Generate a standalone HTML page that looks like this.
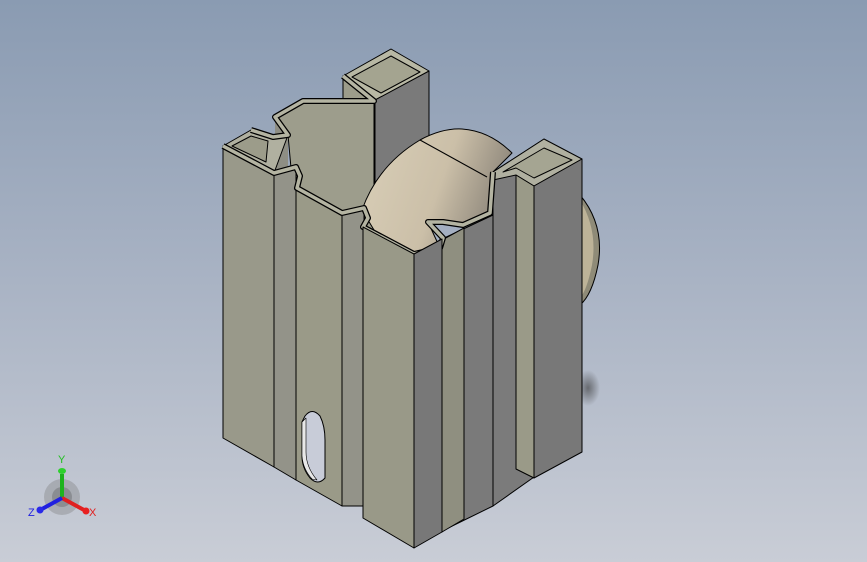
<!DOCTYPE html>
<html><head><meta charset="utf-8"><style>
html,body{margin:0;padding:0;width:867px;height:562px;overflow:hidden}
body{background:linear-gradient(#8a9bb2 0%,#a9b3c4 50%,#c9cdd6 100%)}
svg{position:absolute;left:0;top:0}
</style></head><body>
<svg width="867" height="562" viewBox="0 0 867 562" xmlns="http://www.w3.org/2000/svg">
<defs>
<radialGradient id="sh" cx="0.5" cy="0.5" r="0.5"><stop offset="0" stop-color="#333" stop-opacity="0.6"/><stop offset="1" stop-color="#333" stop-opacity="0"/></radialGradient>
<linearGradient id="wh" x1="0" y1="0" x2="1" y2="0.3"><stop offset="0" stop-color="#d9cfb8"/><stop offset="0.6" stop-color="#cbbfa8"/><stop offset="1" stop-color="#8f887c"/></linearGradient>
</defs>
<g stroke="#000" stroke-width="1" stroke-linejoin="round">
<ellipse cx="588" cy="388" rx="12" ry="18" fill="url(#sh)" stroke="none"/>
<path d="M580,195 Q605,225 598,265 Q592,295 580,305 Z" fill="#8f8b78"/>
<path d="M580,200 Q598,230 592,265 Q587,290 580,298 Z" fill="#bdb398" stroke="none"/>
<polygon points="343,76 375,95 375,180 343,180" fill="#9c9c8a"/>
<polygon points="375,95 429,71 429,300 375,300" fill="#7a7a7a"/>
<polygon points="343,76 391,49 429,71 375,100" fill="#b8b8a4"/>
<polygon points="352,77 391,56 420,72 381,93" fill="#a4a490"/>
<polygon points="275,117 303,101 374,101 374,300 303,300 288,135" fill="#9d9d8c"/>
<polygon points="275,117 288,135 288,300 275,300" fill="#8e8e84" stroke="none"/>
<path d="M362,210 Q378,165 420,140 Q442,128 462,129 Q490,131 512,153 L493,172 L490,213 L463,225 L443,222 L428,222 L440,248 L414,254 L380,240 Z" fill="url(#wh)"/>
<path d="M420,140 L487,177" fill="none"/>
<polygon points="440,240 493,215 493,506 440,532" fill="#7a7a7a"/>
<polygon points="442,240 464,228 464,519 442,532" fill="#8f8f80"/>
<polygon points="493,172 544,139 544,470 493,506" fill="#7b7b7b"/>
<polygon points="493,172 544,139 582,159 534,186 516,175 493,180" fill="#b0b0a0"/>
<polygon points="503,172 544,148 572,160 534,178 516,168" fill="#a5a592"/>
<polygon points="516,175 534,186 534,478 516,469" fill="#9a9a88"/>
<polygon points="534,186 582,159 582,452 534,478" fill="#787878"/>
<polygon points="223,146 251,130 273,137 288,135 274,173" fill="#b0b0a0"/>
<polygon points="232,146 251,136 268,141 266,162" fill="#9c9c8a"/>
<polygon points="223,146 274,173 274,467 223,438" fill="#99998a"/>
<polygon points="274,173 296,168 296,480 274,467" fill="#939389"/>
<polygon points="296,188 342,213 342,506 296,480" fill="#9a9a88"/>
<polygon points="342,213 364,208 364,506 342,506" fill="#939389"/>
<polyline points="223,146 274,173 296,167 300,176 297,188 342,213 364,208 368,218 363,227 414,254 440,248 443,238 428,222 443,222 463,225 490,213 493,172" fill="none" stroke="#000" stroke-width="6"/>
<polyline points="223,146 274,173 296,167 300,176 297,188 342,213 364,208 368,218 363,227 414,254 440,248 443,238 428,222 443,222 463,225 490,213 493,172" fill="none" stroke="#b4b4a2" stroke-width="3.5"/>
<polyline points="251,130 273,137 288,135 275,117 303,101 374,101 343,76" fill="none" stroke="#000" stroke-width="6"/>
<polyline points="251,130 273,137 288,135 275,117 303,101 374,101 343,76" fill="none" stroke="#b4b4a2" stroke-width="3.5"/>
<path d="M305,416 Q312,407 320,416 Q325,426 325,440 L325,478 Q318,486 310,478 Q302,468 302,456 L302,422 Z" fill="#c8ccd8"/>
<path d="M302,422 L302,456 Q303,469 312,479 L317,480 Q306,467 306,452 L306,418 Z" fill="#e8e8e8" stroke-width="0.6"/>
<polygon points="363,227 414,254 414,548 363,518" fill="#999988"/>
<polygon points="414,254 442,239 442,532 414,548" fill="#787878"/>
</g>
<g>
<circle cx="62" cy="497" r="18" fill="#777" opacity="0.35"/>
<circle cx="62" cy="497" r="10" fill="#555" opacity="0.35"/>
<line x1="62" y1="498" x2="62" y2="474" stroke="#1db31d" stroke-width="4"/>
<ellipse cx="62" cy="471" rx="4" ry="3" fill="#2ed02e"/>
<line x1="62" y1="498" x2="84" y2="510" stroke="#e02020" stroke-width="4"/>
<circle cx="86" cy="511" r="3.5" fill="#e82020"/>
<line x1="62" y1="498" x2="42" y2="509" stroke="#2020e0" stroke-width="4"/>
<circle cx="40" cy="510" r="3.5" fill="#2a2ae8"/>
<text x="58" y="463" font-family="Liberation Sans, sans-serif" font-size="11" fill="#22c022">Y</text>
<text x="89" y="516" font-family="Liberation Sans, sans-serif" font-size="11" fill="#e02020">X</text>
<text x="28" y="516" font-family="Liberation Sans, sans-serif" font-size="11" fill="#2020e0">Z</text>
</g>
</svg>
</body></html>
